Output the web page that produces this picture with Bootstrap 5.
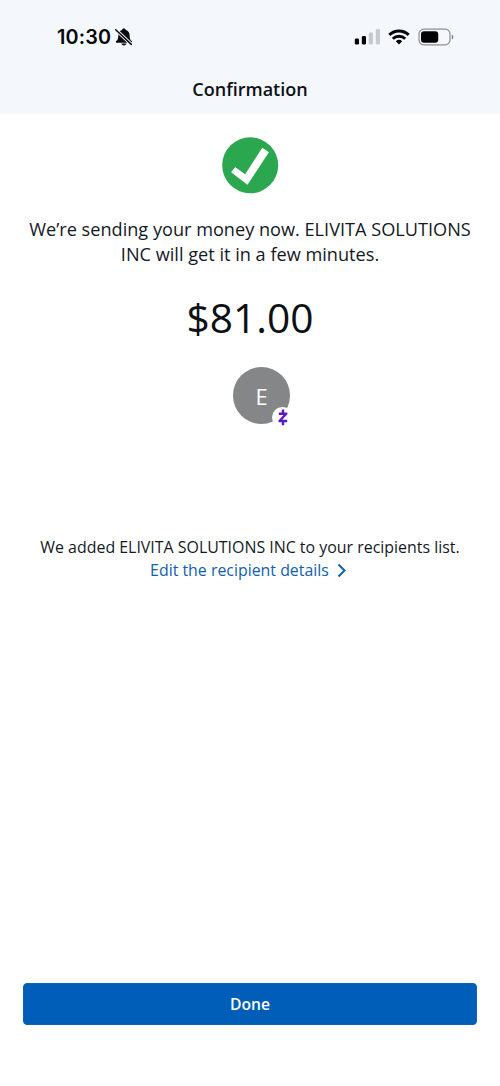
<!DOCTYPE html>
<html lang="en">
<head>
<meta charset="utf-8">
<meta name="viewport" content="width=device-width, initial-scale=1">
<title>Confirmation</title>
<link href="https://cdn.jsdelivr.net/npm/bootstrap@5.3.0/dist/css/bootstrap.min.css" rel="stylesheet">
<style>
body{font-family:"Open Sans","Noto Sans",sans-serif;color:#14191f;background:#fff}
.screen{height:1086px;overflow:hidden}
.top-area{height:114px;background:#f4f8fd}
.status-row{height:74px;padding:0 46px 0 57px}
.clock{font:600 19.8px/24px Inter,"Liberation Sans",sans-serif;letter-spacing:.2px;color:#050608;width:57px}
.page-title{font-size:18px;line-height:30px;font-weight:600;color:#0c1015}
.check-icon{margin-top:23px}
.message{font-size:18.15px;line-height:25px;margin-top:23px;white-space:nowrap}
.amount{font-size:40.7px;line-height:56px;margin-top:22px;color:#0c1015}
.avatar{width:57px;height:57px;margin:22px 0 0 23px;background:#848688;color:#fff;font-size:22px;line-height:30px}
.zelle{right:-3px;bottom:-4px}
.added{font-size:15.93px;line-height:23px;margin-top:112px;white-space:nowrap}
.edit-link{color:#1160b0;font-size:15.9px;line-height:23px;margin-right:2px}
.edit-link svg{margin-left:7px}
.done-btn{margin:0 23px 61px;height:42px;font-size:15.7px;font-weight:600;color:#fff;background:#005eb8;border:1px solid #0b66b9;border-radius:4px}
.done-btn span{display:block;padding-top:1px}
.done-btn:hover{background:#00509e;color:#fff}
</style>
</head>
<body>
<div class="screen d-flex flex-column">
  <header class="top-area">
    <div class="status-row d-flex align-items-center justify-content-between">
      <div class="d-flex align-items-center">
        <span class="clock">10:30</span>
        <svg width="20" height="20" viewBox="0 0 20 20"><path d="M9.800 1.500c1 0 1.800.6 1.900 1.400 2.700.8 3.900 2.800 3.900 5.300 0 3.500.8 4.700 2.100 5.900.7.800.3 1.700-.6 1.700H2.800c-1 0-1.300-1-.6-1.700 1.400-1.300 2.100-2.400 2.100-5.900 0-2.500 1.200-4.500 3.700-5.300.1-.8.8-1.400 1.800-1.400zM7.300 16.500h5.200c-.2 1.100-1.300 1.900-2.600 1.900s-2.400-.8-2.600-1.900z" fill="#080a0c"/><path d="M1.500 2.500 17.500 17.500" stroke="#f4f8fd" stroke-width="3.300"/><path d="M1.700 2.700 17.300 17.400" stroke="#080a0c" stroke-width="1.500" stroke-linecap="round"/></svg>
      </div>
      <svg width="100" height="20" viewBox="0 0 100 20"><g fill="#050608"><rect x=".8" y="11.500" width="4.200" height="6" rx="1.300"/><rect x="7.800" y="9" width="4.200" height="8.500" rx="1.300"/></g><g fill="#c6c9cd"><rect x="14.800" y="5.500" width="4.200" height="12" rx="1.300"/><rect x="21.800" y="2" width="4.200" height="15.500" rx="1.300"/></g>
        <g fill="none" stroke="#050608" stroke-width="2.900"><path d="M35.300 7.900a14 14 0 0 1 19.400 0"/><path d="M38.800 11.700a9 9 0 0 1 12.400 0"/></g><path d="m45 17.500-3.200-3.200a4.700 4.700 0 0 1 6.400 0z" fill="#050608"/>
        <rect x="65" y="2.200" width="31" height="15.600" rx="4.800" fill="none" stroke="#8b8f92" stroke-width="1.200"/><rect x="67" y="4.300" width="17.200" height="11.400" rx="3" fill="#020304"/><path d="M97.800 7.500c2 .7 2 4.300 0 5z" fill="#777b7e"/></svg>
    </div>
    <h1 class="page-title text-center m-0">Confirmation</h1>
  </header>
  <main class="d-flex flex-column align-items-center text-center flex-grow-1">
    <svg class="check-icon flex-shrink-0" width="57" height="57" viewBox="0 0 57 57"><circle cx="28.200" cy="28.300" r="28" fill="#2ba84f"/><path d="M9.600 35.200 13.200 30.600 23.300 37.800 40.300 11.300 46.500 15.300 25.400 47.300z" fill="#fff" stroke="#fff" stroke-width=".8" stroke-linejoin="round"/></svg>
    <p class="message mb-0">We’re sending your money now. ELIVITA SOLUTIONS<br>INC will get it in a few minutes.</p>
    <div class="amount">$81.00</div>
    <div class="avatar rounded-circle position-relative d-flex align-items-center justify-content-center flex-shrink-0">E
      <svg class="zelle position-absolute" width="21" height="21" viewBox="0 0 21 21"><circle cx="10.500" cy="10.500" r="10.500" fill="#fff"/><path d="M6.800 6.700h7.500L7.500 14h7.700M11 2.500v4M11 14v4.300" fill="none" stroke="#5a18c9" stroke-width="2.400" stroke-linejoin="round"/></svg>
    </div>
    <p class="added mb-0">We added ELIVITA SOLUTIONS INC to your recipients list.</p>
    <a class="edit-link d-flex align-items-center text-decoration-none" href="#">Edit the recipient details<svg width="12" height="16" viewBox="0 0 12 16"><path d="m2.500 1.500 6 6-6 6" fill="none" stroke="#1160b0" stroke-width="2"/></svg></a>
  </main>
  <button class="btn done-btn p-0" type="button"><span>Done</span></button>
</div>
<script src="https://cdn.jsdelivr.net/npm/bootstrap@5.3.0/dist/js/bootstrap.bundle.min.js"></script>
</body>
</html>
